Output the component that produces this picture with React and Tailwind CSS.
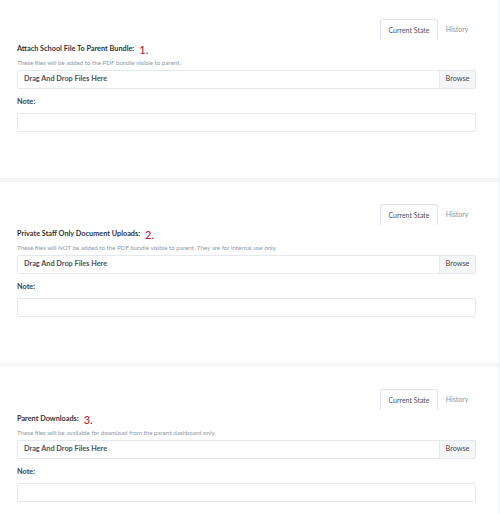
import React from "react";

const sections = [
  {
    title: "Attach School File To Parent Bundle:",
    num: "1.",
    desc: "These files will be added to the PDF bundle visible to parent.",
    pt: "pt-[19px]",
  },
  {
    title: "Private Staff Only Document Uploads:",
    num: "2.",
    desc: "These files will NOT be added to the PDF bundle visible to parent. They are for internal use only.",
    pt: "pt-[22px]",
  },
  {
    title: "Parent Downloads:",
    num: "3.",
    desc: "These files will be available for download from the parent dashboard only.",
    pt: "pt-[22px]",
  },
];

function Card({ s }) {
  return (
    <div className={`bg-white ${s.pt} pb-[46px] pl-[17px] pr-[22px]`}>
      <div className="flex justify-end h-[21px]">
        <div className="flex items-center justify-center w-[58px] h-[21px] border border-b-0 border-[#dce4ea] rounded-t-[3px] text-[7px] text-[#4b5563]">
          Current State
        </div>
        <div className="flex items-center justify-center w-[38px] h-[21px] text-[7px] text-[#8794a1]">
          History
        </div>
      </div>
      <div className="flex items-center h-[12px] mt-[3px]">
        <span className="text-[7.3px] font-bold text-[#2f343a]">{s.title}</span>
        <span className="ml-[5px] text-[11px] font-medium text-[#b3203c] leading-none">{s.num}</span>
      </div>
      <div className="h-[8px] mt-[4px] flex items-center text-[6.2px] text-[#8a9aa8] whitespace-nowrap">
        {s.desc}
      </div>
      <div className="mt-[3px] flex h-[19px] border border-[#e5e9ed] rounded-[2px]">
        <div className="flex-1 flex items-center pl-[6px] text-[7.3px] font-bold text-[#4a525b]">
          Drag And Drop Files Here
        </div>
        <div className="w-[36px] flex items-center justify-center bg-[#f5f6f8] border-l border-[#e5e9ed] text-[7.3px] text-[#3f464e]">
          Browse
        </div>
      </div>
      <div className="mt-[9px] h-[8px] flex items-center text-[7.3px] font-bold text-[#3a4047]">
        Note:
      </div>
      <div className="mt-[7px] h-[19px] border border-[#e5e9ed] rounded-[2px]" />
    </div>
  );
}

export default function App() {
  return (
    <div
      className="w-[500px] h-[514px] overflow-hidden bg-[#f4f5f7] pr-[2px] flex flex-col gap-[4px]"
      style={{ fontFamily: 'Lato, "Noto Sans", sans-serif' }}
    >
      {sections.map((s, i) => (
        <Card key={i} s={s} />
      ))}
    </div>
  );
}
